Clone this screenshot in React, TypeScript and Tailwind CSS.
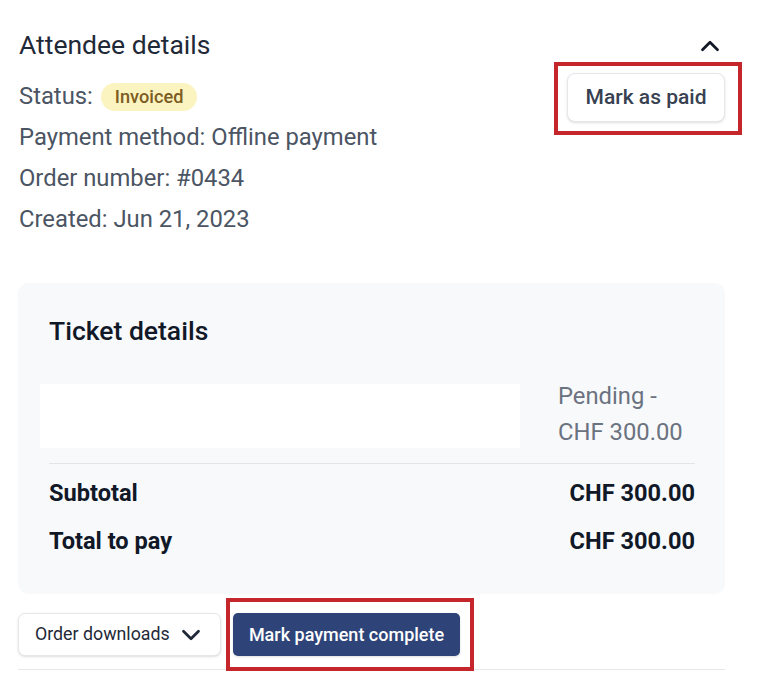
import { ChevronUp, ChevronDown } from 'lucide-react';

export default function App() {
  return (
    <div className="w-[776px] h-[696px] bg-white font-['Roboto',sans-serif] overflow-hidden">
      <div className="pl-[19px] pr-[51px] pt-[29px]">
        <div className="flex justify-between">
          <div className="flex flex-col">
            <h2 className="text-[26.5px] leading-[32px] text-[#1f2937]">Attendee details</h2>
            <div className="mt-[15px] flex flex-col text-[23.8px] text-[#4b5563] leading-[41px]">
              <div className="flex items-center gap-[8px]">
                <span>Status:</span>
                <span className="rounded-full bg-[#fcf4c0] px-[14px] leading-[28px] text-[18.2px] font-medium text-[#7b5c22]">
                  Invoiced
                </span>
              </div>
              <div>Payment method: Offline payment</div>
              <div>Order number: #0434</div>
              <div>Created: Jun 21, 2023</div>
            </div>
          </div>
          <div className="flex flex-col items-end">
            <ChevronUp className="mt-[2px] h-[30px] w-[30px] text-[#111827]" strokeWidth={2.2} />
            <div className="mt-[1px] -mr-[17px] border-[4px] border-[#c4262b] pb-[9px] pl-[9px] pr-[13px] pt-[7px]">
              <button className="h-[49px] w-[158px] rounded-[8px] border border-[#e5e7eb] bg-white text-[21px] font-medium text-[#374151] shadow-sm">
                Mark as paid
              </button>
            </div>
          </div>
        </div>

        <div className="mt-[43px] -ml-px rounded-[10px] bg-[#f8f9fb] pb-[37px] pl-[31px] pr-[30px] pt-[34px]">
          <h3 className="text-[26.5px] font-medium leading-[28px] text-[#111827]">Ticket details</h3>
          <div className="mt-[39px] flex items-start -ml-[9px]">
            <div className="h-[64px] w-[480px] bg-white"></div>
            <div className="ml-[38px] flex flex-col text-[23.8px] leading-[36px] text-[#6b7280] -mt-[6px]">
              <span>Pending -</span>
              <span>CHF 300.00</span>
            </div>
          </div>
          <div className="mt-[13px] border-t border-[#e2e4e8]"></div>
          <div className="mt-[13px] flex justify-between text-[23.6px] font-bold leading-[32px] text-[#111827]">
            <span>Subtotal</span>
            <span>CHF 300.00</span>
          </div>
          <div className="mt-[16px] flex justify-between text-[23.6px] font-bold leading-[32px] text-[#111827]">
            <span>Total to pay</span>
            <span>CHF 300.00</span>
          </div>
        </div>

        <div className="mt-[4px] flex items-center -ml-px">
          <button className="flex h-[43px] w-[203px] items-center gap-[6px] rounded-[7px] border border-[#e5e7eb] bg-white pl-[16px] text-[17.8px] text-[#1f2937] shadow-sm">
            Order downloads
            <ChevronDown className="h-[30px] w-[30px]" strokeWidth={2.2} />
          </button>
          <div className="ml-[5px] border-[4px] border-[#c4262b] pb-[11px] pl-[3px] pr-[10px] pt-[11px]">
            <button className="block h-[43px] w-[227px] rounded-[5px] bg-[#2e4478] text-[18px] font-medium text-white shadow-sm">
              Mark payment complete
            </button>
          </div>
        </div>
        <div className="-mt-[2px] -ml-px border-t border-[#e5e7eb]"></div>
      </div>
    </div>
  );
}
